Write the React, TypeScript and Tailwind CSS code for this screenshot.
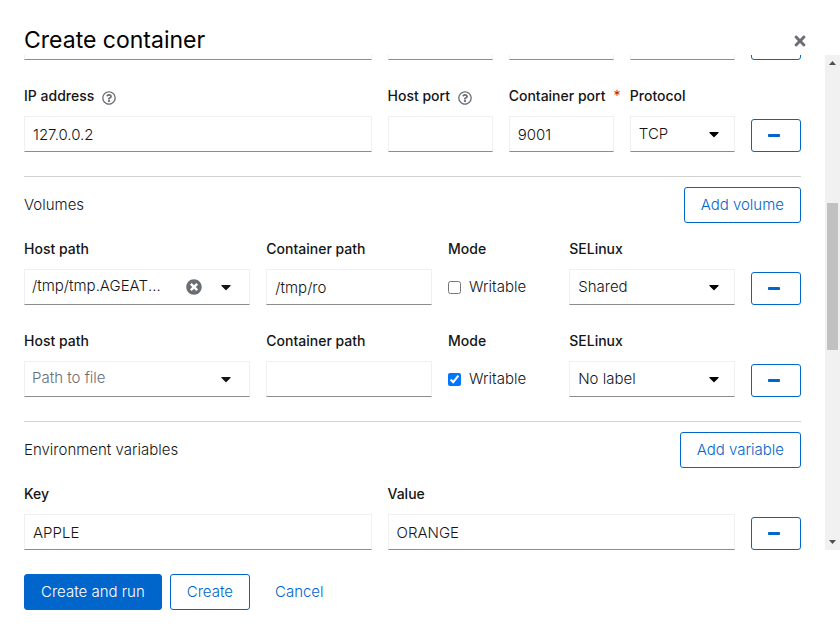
import { useId, useLayoutEffect, useRef } from "react";
import type { ComponentProps, ReactNode } from "react";
import { FaCaretDown, FaRegQuestionCircle, FaTimes, FaTimesCircle } from "react-icons/fa";

const field =
  "h-9 w-full min-w-0 border border-[#f0f0f0] border-b-[#8a8d90] bg-white px-2 text-[15px] font-light text-[#151515] outline-none focus:border-b-[#0066cc]";

function Label({ htmlFor, children }: { htmlFor?: string; children: ReactNode }) {
  return (
    <label htmlFor={htmlFor} className="text-sm leading-6 font-medium whitespace-nowrap">
      {children}
    </label>
  );
}

function Field({
  label,
  span,
  help,
  required,
  children,
}: {
  label: string;
  span: string;
  help?: boolean;
  required?: boolean;
  children: (id: string) => ReactNode;
}) {
  const id = useId();
  return (
    <div className={`${span} min-w-0`}>
      <div className="mb-2 flex h-6 items-center gap-2">
        <Label htmlFor={id}>{label}</Label>
        {required && (
          <span aria-hidden="true" className="text-sm leading-6 text-[#c9190b]">
            *
          </span>
        )}
        {help && (
          <button type="button" aria-label={`More info about ${label}`} className="pt-1 text-[#6a6e73]">
            <FaRegQuestionCircle size={14} />
          </button>
        )}
      </div>
      {children(id)}
    </div>
  );
}

function TextField({
  label,
  span,
  value = "",
  help,
  required,
}: {
  label: string;
  span: string;
  value?: string;
  help?: boolean;
  required?: boolean;
}) {
  return (
    <Field label={label} span={span} help={help} required={required}>
      {(id) => <input id={id} type="text" defaultValue={value} required={required} className={field} />}
    </Field>
  );
}

function SelectField({ label, span, options }: { label: string; span: string; options: string[] }) {
  return (
    <Field label={label} span={span}>
      {(id) => (
        <div className="relative">
          <select id={id} className={`${field} appearance-none pr-8`}>
            {options.map((o) => (
              <option key={o}>{o}</option>
            ))}
          </select>
          <FaCaretDown size={16} className="pointer-events-none absolute top-[10px] right-[13px] text-black" />
        </div>
      )}
    </Field>
  );
}

function PathField({ value }: { value?: string }) {
  return (
    <Field label="Host path" span="col-span-4">
      {(id) => (
        <div className="flex h-9 items-center border border-[#f0f0f0] border-b-[#8a8d90] pr-[18px] pb-[1px] pl-[7px]">
          <input
            id={id}
            type="text"
            defaultValue={value}
            placeholder="Path to file"
            className="min-w-0 flex-1 text-[15px] font-light text-ellipsis text-[#151515] outline-none placeholder:text-[#6a6e73]"
          />
          {value && (
            <button type="button" aria-label="Clear" className="ml-4 text-[#6a6e73]">
              <FaTimesCircle size={16} />
            </button>
          )}
          <button type="button" aria-label="Show options" className="ml-[19px] text-[#151515]">
            <FaCaretDown size={16} className="-mx-[3px] w-4" />
          </button>
        </div>
      )}
    </Field>
  );
}

function ModeField({ checked }: { checked?: boolean }) {
  const id = useId();
  return (
    <fieldset className="col-span-2 min-w-0">
      <legend className="mb-2 text-sm leading-6 font-medium">Mode</legend>
      <div className="flex h-9 items-center gap-2">
        <input id={id} type="checkbox" defaultChecked={checked} className="size-[13px]" />
        <label htmlFor={id} className="text-[15px] font-light">
          Writable
        </label>
      </div>
    </fieldset>
  );
}

function Row({ children }: { children: ReactNode }) {
  return (
    <div className="flex items-end gap-4">
      <div className="grid min-w-0 flex-1 grid-cols-12 gap-4">{children}</div>
      <button
        type="button"
        aria-label="Remove item"
        className="flex h-[33px] w-[50px] items-center justify-center rounded-[3px] border border-[#0066cc] pr-1 text-[#0066cc]"
      >
        <svg width="12" height="5" viewBox="0 0 12 5" aria-hidden="true">
          <rect y="1" width="12" height="3" rx="0.8" fill="currentColor" />
        </svg>
      </button>
    </div>
  );
}

function Button({ className = "", ...props }: ComponentProps<"button">) {
  return (
    <button
      type="button"
      className={`h-9 rounded-[3px] border px-4 text-[15px] font-light whitespace-nowrap ${className}`}
      {...props}
    />
  );
}

function Section({ title, action, children }: { title: string; action: string; children: ReactNode }) {
  return (
    <section className="mt-6 border-t border-[#d2d2d2] pt-[10px]">
      <div className="mb-[14px] flex items-center justify-between">
        <h2 className="text-[15px] font-light">{title}</h2>
        <Button className="border-[#0066cc] text-[#0066cc]">{action}</Button>
      </div>
      <div className="flex flex-col gap-6">{children}</div>
    </section>
  );
}

function PortRow({ ip, port }: { ip: string; port: string }) {
  return (
    <Row>
      <TextField label="IP address" span="col-span-6" value={ip} help />
      <TextField label="Host port" span="col-span-2" help />
      <TextField label="Container port" span="col-span-2" value={port} required />
      <SelectField label="Protocol" span="col-span-2" options={["TCP", "UDP"]} />
    </Row>
  );
}

function ScrollRail() {
  return (
    <div aria-hidden="true" className="flex w-[15px] shrink-0 flex-col items-center bg-[#f1f1f1]">
      <svg width="15" height="15" viewBox="0 0 15 15" className="shrink-0">
        <path d="M4 10 L7.5 6 L11 10 Z" fill="#505050" />
      </svg>
      <div className="grow-[133]" />
      <div className="w-[11px] grow-[147] bg-[#c1c1c1]" />
      <div className="grow-[185]" />
      <svg width="15" height="15" viewBox="0 0 15 15" className="shrink-0">
        <path d="M4 5 L7.5 9 L11 5 Z" fill="#505050" />
      </svg>
    </div>
  );
}

export default function App() {
  const body = useRef<HTMLDivElement>(null);

  useLayoutEffect(() => {
    if (body.current) body.current.scrollTop = body.current.scrollHeight;
  }, []);

  return (
    <div
      role="dialog"
      aria-labelledby="dialog-title"
      className="flex h-screen flex-col bg-white font-['Inter','Liberation_Sans',sans-serif] text-[#151515]"
    >
      <header className="flex items-end justify-between pt-[25px] pr-[34px] pl-6">
        <h1 id="dialog-title" className="text-[23px] leading-[30px] text-black">
          Create container
        </h1>
        <button type="button" aria-label="Close" className="pb-[6px] text-[#6a6e73]">
          <FaTimes size={16} className="w-3" />
        </button>
      </header>

      <div className="flex min-h-0 flex-1">
        <div ref={body} className="min-w-0 flex-1 overflow-y-auto pr-6 pl-6 [scrollbar-width:none]">
          <div className="flex flex-col gap-6">
            <PortRow ip="127.0.0.1" port="9000" />
            <PortRow ip="127.0.0.2" port="9001" />
          </div>

          <Section title="Volumes" action="Add volume">
            <Row>
              <PathField value="/tmp/tmp.AGEATWyqLs" />
              <TextField label="Container path" span="col-span-3" value="/tmp/ro" />
              <ModeField />
              <SelectField label="SELinux" span="col-span-3" options={["Shared", "Private", "No label"]} />
            </Row>
            <Row>
              <PathField />
              <TextField label="Container path" span="col-span-3" />
              <ModeField checked />
              <SelectField label="SELinux" span="col-span-3" options={["No label", "Shared", "Private"]} />
            </Row>
          </Section>

          <Section title="Environment variables" action="Add variable">
            <Row>
              <TextField label="Key" span="col-span-6" value="APPLE" />
              <TextField label="Value" span="col-span-6" value="ORANGE" />
            </Row>
          </Section>
        </div>
        <ScrollRail />
      </div>

      <footer className="flex gap-2 p-6">
        <Button className="border-[#0066cc] bg-[#0066cc] text-white">Create and run</Button>
        <Button className="border-[#0066cc] text-[#0066cc]">Create</Button>
        <Button className="border-transparent text-[#0066cc]">Cancel</Button>
      </footer>
    </div>
  );
}
